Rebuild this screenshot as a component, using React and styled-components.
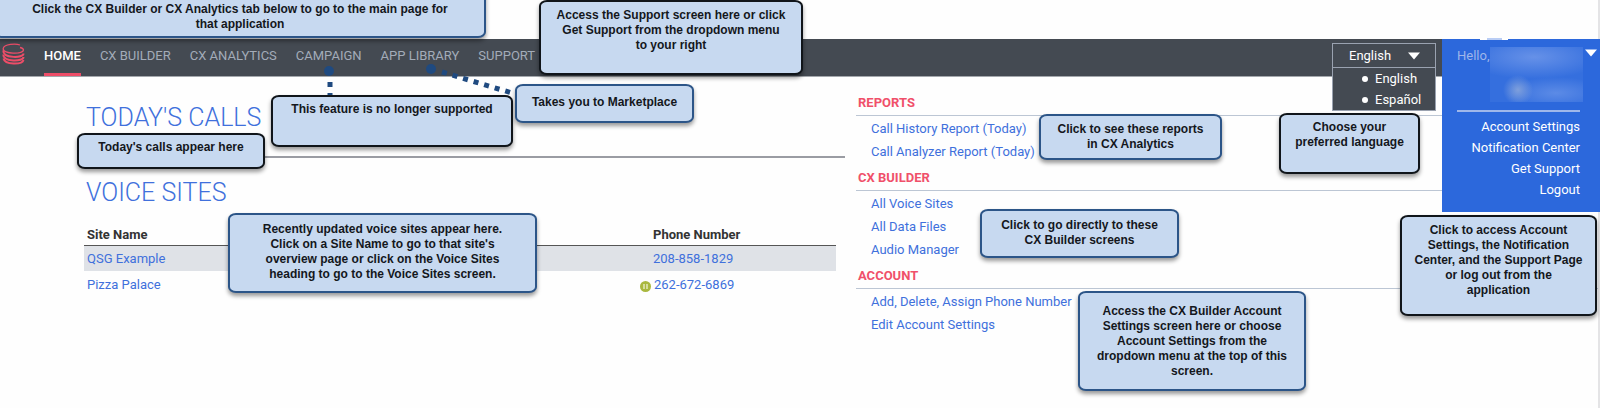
import React, { useState } from "react";
import styled, { createGlobalStyle } from "styled-components";

const GlobalStyle = createGlobalStyle`
  * {
    box-sizing: border-box;
  }

  body {
    margin: 0;
    background: #fefefe;
    font-family: Roboto, "Liberation Sans", sans-serif;
    font-size: 13px;
    color: #333333;
    overflow: hidden;
  }

  ul {
    margin: 0;
    padding: 0;
    list-style: none;
  }

  a {
    color: #4070dc;
    text-decoration: none;
  }
`;

const Page = styled.div`
  position: relative;
  min-height: 100vh;
  padding-top: 39px;
  border-right: 2px solid #e4e4e6;
`;

const TopBar = styled.header`
  display: flex;
  align-items: stretch;
  height: 38px;
  margin-right: -2px;
  padding: 0 164px 0 2px;
  background: #444a52;
  border-bottom: 1px solid #a4a8ad;
`;

const Logo = styled.a`
  display: flex;
  align-items: center;
  width: 42px;
  padding-bottom: 7px;
`;

const Nav = styled.nav`
  display: flex;
  gap: 19px;
`;

const NavLink = styled.a`
  padding-top: 7px;
  line-height: 20px;
  font-size: 13px;
  color: ${(props) => (props.$active ? "#ffffff" : "#a3acb9")};
  font-weight: ${(props) => (props.$active ? 500 : 400)};
  border-bottom: 3px solid ${(props) => (props.$active ? "#ee4d68" : "transparent")};
`;

const Language = styled.div`
  position: relative;
  width: 104px;
  margin: 4px 0 0 auto;
`;

const LanguageButton = styled.button`
  display: flex;
  align-items: center;
  justify-content: space-between;
  width: 100%;
  height: 25px;
  padding: 0 15px 0 16px;
  background: #444a52;
  border: 1px solid #9aa2b0;
  color: #ffffff;
  font: inherit;
  cursor: pointer;
`;

const LanguageMenu = styled.ul`
  position: absolute;
  top: 24px;
  left: 0;
  width: 100%;
  background: #444a52;
  border: 1px solid #9aa2b0;
`;

const LanguageItem = styled.li`
  display: flex;
  align-items: center;
  gap: 7px;
  padding-left: 29px;
  line-height: 21px;

  &::before {
    content: "";
    width: 6px;
    height: 6px;
    border-radius: 50%;
    background: #ffffff;
  }

  a {
    color: #ffffff;
  }
`;

const AccountPanel = styled.aside`
  position: absolute;
  top: 39px;
  right: -2px;
  width: 158px;
  height: 173px;
  padding: 7px 20px 0 15px;
  background: #2c68dc;

  &::before {
    content: "";
    position: absolute;
    top: -1px;
    left: 38px;
    width: 28px;
    height: 2px;
    background: linear-gradient(90deg, #ffffff 25%, #b9cdf5 25% 80%, #ffffff 80%);
  }
`;

const Greeting = styled.div`
  display: flex;
  align-items: flex-start;
  height: 64px;
  line-height: 20px;
  color: #9fb6ea;
`;

const HiddenName = styled.div`
  flex: 1;
  height: 55px;
  margin: 1px -3px 0 1px;
  background:
    radial-gradient(circle 15px at 28px 43px, #7e9fdc, transparent),
    radial-gradient(ellipse 50px 16px at 66px 46px, #5c8be6, transparent),
    radial-gradient(ellipse 70px 22px at 44px 10px, #6691e8, transparent),
    #356fde;
`;

const AccountToggle = styled.button`
  position: absolute;
  top: 10px;
  right: 3px;
  display: flex;
  padding: 0;
  background: none;
  border: 0;
  cursor: pointer;
`;

const AccountLinks = styled.ul`
  padding-top: 4px;
  border-top: 2px solid #9fb7ea;
  text-align: right;
  line-height: 21px;

  a {
    color: #ffffff;
  }
`;

const Content = styled.main`
  display: flex;
  gap: 11px;
  padding: 10px 0 0 84px;
`;

const Overview = styled.div`
  flex: 761;
`;

const Shortcuts = styled.div`
  flex: 742;
  padding-top: 1px;
`;

const Heading = styled.h1`
  margin: 0;
  padding: 15px 0 0 2px;
  font-size: 25px;
  line-height: 32px;
  font-weight: 300;
  text-transform: uppercase;
`;

const CallsSection = styled.section`
  height: 71px;
  margin-bottom: 4px;
  border-bottom: 2px solid #9a9ca3;
`;

const SitesTable = styled.table`
  width: calc(100% - 9px);
  margin-top: 16px;
  border-collapse: collapse;
  table-layout: fixed;

  th,
  td {
    height: 26px;
    padding: 0 3px;
    text-align: left;
    font-size: 13px;
  }

  th {
    height: 20px;
    border-bottom: 1px solid #555555;
    font-weight: 700;
  }

  th:last-child {
    width: 186px;
  }

  tbody tr:first-child {
    background: #dfe2e7;
  }
`;

const Phone = styled.a`
  display: flex;
  align-items: center;
  gap: 3px;
  margin-left: ${(props) => (props.$paused ? "-13px" : "0")};

  svg {
    margin-top: 4px;
  }
`;

const ShortcutHeading = styled.h2`
  margin: 0;
  padding: 3px 0 0 2px;
  font-size: 13px;
  line-height: 24px;
  font-weight: 700;
  text-transform: uppercase;
  color: #f0506a;
  border-bottom: 1px solid #bcc6d4;
`;

const ShortcutList = styled.ul`
  padding: 1px 0 0 15px;
  line-height: 23px;
`;

const Connectors = styled.svg`
  position: absolute;
  top: 60px;
  left: 320px;
`;

const Callout = styled.div`
  position: absolute;
  top: ${(props) => props.$top}px;
  ${(props) => (props.$right === undefined ? `left: ${props.$left}px;` : `right: ${props.$right}px;`)}
  width: ${(props) => props.$width}px;
  height: ${(props) => props.$height}px;
  padding-top: ${(props) => props.$pad}px;
  background: #c7d9f0;
  border: 2px solid ${(props) => (props.$dark ? "#10151a" : "#2c5588")};
  border-radius: 8px / 6px;
  box-shadow: 0 3px 4px rgba(0, 0, 0, 0.4);
  color: #14171c;
  font-family: "Liberation Sans", Arial, sans-serif;
  font-size: 12px;
  font-weight: 700;
  line-height: 15px;
  text-align: center;
  white-space: pre-line;
`;

const navItems = ["Home", "CX Builder", "CX Analytics", "Campaign", "App Library", "Support"];

const sites = [
  { name: "QSG Example", phone: "208-858-1829" },
  { name: "Pizza Palace", phone: "262-672-6869", paused: true },
];

const shortcuts = [
  { title: "Reports", links: ["Call History Report (Today)", "Call Analyzer Report (Today)"] },
  { title: "CX Builder", links: ["All Voice Sites", "All Data Files", "Audio Manager"] },
  { title: "Account", links: ["Add, Delete, Assign Phone Number", "Edit Account Settings"] },
];

const accountLinks = ["Account Settings", "Notification Center", "Get Support", "Logout"];

const callouts = [
  { left: -6, top: -20, width: 492, height: 58, pad: 20, text: "Click the CX Builder or CX Analytics tab below to go to the main page for\nthat application" },
  { left: 539, top: 0, width: 264, height: 75, pad: 6, dark: true, text: "Access the Support screen here or click\nGet Support from the dropdown menu\nto your right" },
  { left: 271, top: 95, width: 242, height: 52, pad: 5, dark: true, text: "This feature is no longer supported" },
  { left: 77, top: 133, width: 188, height: 36, pad: 5, dark: true, text: "Today's calls appear here" },
  { left: 515, top: 84, width: 179, height: 39, pad: 9, text: "Takes you to Marketplace" },
  { left: 228, top: 213, width: 309, height: 80, pad: 7, text: "Recently updated voice sites appear here.\nClick on a Site Name to go to that site's\noverview page or click on the Voice Sites\nheading to go to the Voice Sites screen." },
  { left: 1039, top: 114, width: 183, height: 46, pad: 6, text: "Click to see these reports\nin CX Analytics" },
  { left: 980, top: 209, width: 199, height: 49, pad: 7, text: "Click to go directly to these\nCX Builder screens" },
  { left: 1078, top: 291, width: 228, height: 100, pad: 11, text: "Access the CX Builder Account\nSettings screen here or choose\nAccount Settings from the\ndropdown menu at the top of this\nscreen." },
  { right: 178, top: 113, width: 141, height: 61, pad: 5, dark: true, text: "Choose your\npreferred language" },
  { right: 1, top: 215, width: 197, height: 101, pad: 6, dark: true, text: "Click to access Account\nSettings, the Notification\nCenter, and the Support Page\nor log out from the\napplication" },
];

const Caret = () => (
  <svg width="12" height="8" viewBox="0 0 12 8" aria-hidden="true">
    <path d="M0 0.5h12L6 7.5z" fill="#ffffff" />
  </svg>
);

const CoilIcon = () => (
  <svg width="23" height="22" viewBox="0 0 23 22" fill="none" stroke="#ee4d68" aria-hidden="true">
    <path d="M18 2C14 .3 2 .8 1.200 5.500C.8 11.500 21 11.500 21.500 7C21.500 5.800 20 5 18 4.500" strokeWidth="1.300" />
    <path d="M1.300 7.500C1 15.500 21.500 15.500 21.500 10.500" strokeWidth="2" />
    <path d="M1.300 11.500C1 19 21.500 19 21.500 14" strokeWidth="2" />
    <path d="M1.500 15.500C3 22 20 22 21.500 17" strokeWidth="2" />
  </svg>
);

const PauseIcon = () => (
  <svg width="11" height="12" viewBox="0 0 11 12" aria-hidden="true">
    <circle cx="5.500" cy="6.500" r="5.500" fill="#a9b83f" />
    <path d="M4 4v5M7 4v5" stroke="#e4e9bd" strokeWidth="1.500" />
  </svg>
);

const LanguagePicker = () => {
  const [open, setOpen] = useState(true);

  return (
    <Language>
      <LanguageButton type="button" aria-expanded={open} onClick={() => setOpen(!open)}>
        English
        <Caret />
      </LanguageButton>
      {open && (
        <LanguageMenu>
          <LanguageItem><a href="#en">English</a></LanguageItem>
          <LanguageItem><a href="#es">Español</a></LanguageItem>
        </LanguageMenu>
      )}
    </Language>
  );
};

const AccountMenu = () => (
  <AccountPanel>
    <Greeting>
      Hello,
      <HiddenName />
    </Greeting>
    <AccountToggle type="button" aria-label="Account menu">
      <Caret />
    </AccountToggle>
    <AccountLinks>
      {accountLinks.map((label) => (
        <li key={label}><a href="#account">{label}</a></li>
      ))}
    </AccountLinks>
  </AccountPanel>
);

const App = () => {
  return (
    <Page>
      <GlobalStyle />
      <TopBar>
        <Logo href="#home" aria-label="Home"><CoilIcon /></Logo>
        <Nav>
          {navItems.map((item, index) => (
            <NavLink key={item} href="#nav" $active={index === 0}>
              {item.toUpperCase()}
            </NavLink>
          ))}
        </Nav>
        <LanguagePicker />
      </TopBar>
      <Content>
        <Overview>
          <CallsSection>
            <Heading><a href="#calls">Today's Calls</a></Heading>
          </CallsSection>
          <Heading as="h2"><a href="#sites">Voice Sites</a></Heading>
          <SitesTable>
            <thead>
              <tr>
                <th>Site Name</th>
                <th>Phone Number</th>
              </tr>
            </thead>
            <tbody>
              {sites.map((site) => (
                <tr key={site.name}>
                  <td><a href="#site">{site.name}</a></td>
                  <td>
                    <Phone href="#phone" $paused={site.paused}>
                      {site.paused && <PauseIcon />}
                      {site.phone}
                    </Phone>
                  </td>
                </tr>
              ))}
            </tbody>
          </SitesTable>
        </Overview>
        <Shortcuts>
          {shortcuts.map((group) => (
            <section key={group.title}>
              <ShortcutHeading>{group.title}</ShortcutHeading>
              <ShortcutList>
                {group.links.map((label) => (
                  <li key={label}><a href="#shortcut">{label}</a></li>
                ))}
              </ShortcutList>
            </section>
          ))}
        </Shortcuts>
      </Content>
      <AccountMenu />
      <Connectors width="200" height="40" viewBox="0 0 200 40" fill="#1f4a80" stroke="#1f4a80" aria-hidden="true">
        <circle cx="9" cy="11" r="5" stroke="none" />
        <path d="M10 22V40" strokeWidth="5" strokeDasharray="5 6" />
        <circle cx="111" cy="9" r="5" stroke="none" />
        <path d="M122 12L192 33" strokeWidth="5" strokeDasharray="5 6" />
      </Connectors>
      {callouts.map((item) => (
        <Callout
          key={item.text}
          $left={item.left}
          $right={item.right}
          $top={item.top}
          $width={item.width}
          $height={item.height}
          $pad={item.pad}
          $dark={item.dark}
        >
          {item.text}
        </Callout>
      ))}
    </Page>
  );
};

export default App;
